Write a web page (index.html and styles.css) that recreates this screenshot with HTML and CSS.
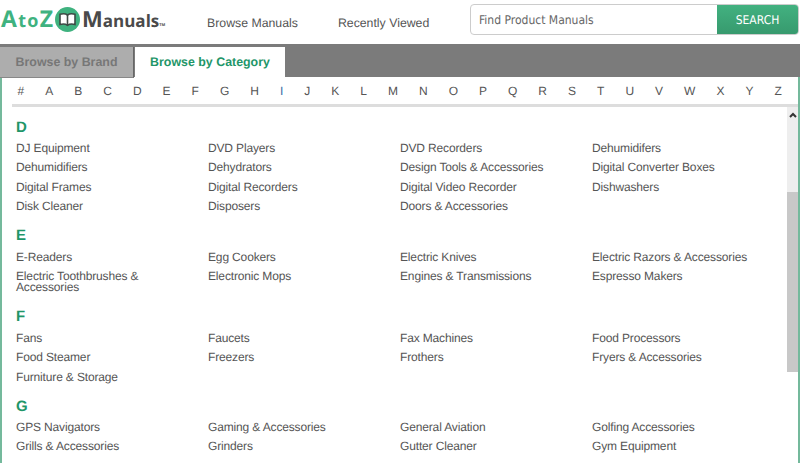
FILE: index.html
```html
<!DOCTYPE html>
<html lang="en">
<head>
<meta charset="utf-8">
<title>AtoZ Manuals</title>
<link rel="stylesheet" href="styles.css">
</head>
<body>
<header class="top">
  <a class="logo"><span class="logo-green"><span class="logo-cap">A</span>to<span class="logo-cap">Z</span></span><svg class="logo-icon" width="25" height="25" viewBox="0 0 25 25"><circle cx="12.500" cy="12.500" r="12.500" fill="#3fb27f"/><path d="M12.500 8C10.500 6.500 7.500 6.500 5 7.300V17.500C7.500 16.800 10.500 16.800 12.500 18.300C14.500 16.800 17.500 16.800 20 17.500V7.300C17.500 6.500 14.500 6.500 12.500 8Z" fill="#fff" stroke="#3d4a45" stroke-width="1.600"/><path d="M12.500 8V18.300" stroke="#3d4a45" stroke-width="1.600"/></svg><span class="logo-dark"><span class="logo-m">M</span>anuals</span><span class="tm">TM</span></a>
  <nav class="nav"><a>Browse Manuals</a><a>Recently Viewed</a></nav>
  <form class="search"><span class="search-input">Find Product Manuals</span><span class="search-btn">SEARCH</span></form>
</header>
<div class="tabband">
  <div class="tab tab-off">Browse by Brand</div>
  <div class="tab tab-on">Browse by Category</div>
</div>
<main class="panel">
  <div class="letters">
    <a>#</a><a>A</a><a>B</a><a>C</a><a>D</a><a>E</a><a>F</a><a>G</a><a>H</a><a class="narrow">I</a><a>J</a><a>K</a><a>L</a><a>M</a><a>N</a><a>O</a><a>P</a><a>Q</a><a>R</a><a>S</a><a>T</a><a>U</a><a>V</a><a>W</a><a>X</a><a>Y</a><a>Z</a>
  </div>
  <div class="body">
    <div class="list">
      <h2>D</h2>
      <div class="grid">
        <a>DJ Equipment</a><a>DVD Players</a><a>DVD Recorders</a><a>Dehumidifers</a>
        <a>Dehumidifiers</a><a>Dehydrators</a><a>Design Tools &amp; Accessories</a><a>Digital Converter Boxes</a>
        <a>Digital Frames</a><a>Digital Recorders</a><a>Digital Video Recorder</a><a>Dishwashers</a>
        <a>Disk Cleaner</a><a>Disposers</a><a>Doors &amp; Accessories</a>
      </div>
      <h2>E</h2>
      <div class="grid">
        <a>E-Readers</a><a>Egg Cookers</a><a>Electric Knives</a><a>Electric Razors &amp; Accessories</a>
        <a>Electric Toothbrushes &amp; Accessories</a><a>Electronic Mops</a><a>Engines &amp; Transmissions</a><a>Espresso Makers</a>
      </div>
      <h2>F</h2>
      <div class="grid">
        <a>Fans</a><a>Faucets</a><a>Fax Machines</a><a>Food Processors</a>
        <a>Food Steamer</a><a>Freezers</a><a>Frothers</a><a>Fryers &amp; Accessories</a>
        <a>Furniture &amp; Storage</a>
      </div>
      <h2>G</h2>
      <div class="grid">
        <a>GPS Navigators</a><a>Gaming &amp; Accessories</a><a>General Aviation</a><a>Golfing Accessories</a>
        <a>Grills &amp; Accessories</a><a>Grinders</a><a>Gutter Cleaner</a><a>Gym Equipment</a>
      </div>
    </div>
    <div class="scrollbar">
      <div class="sb-track"><svg class="sb-arrow" width="8" height="6" viewBox="0 0 8 6"><path d="M1 5L4 2L7 5" fill="none" stroke="#333" stroke-width="2"/></svg></div>
      <div class="sb-thumb"></div>
    </div>
  </div>
</main>
</body>
</html>
```
FILE: styles.css
```css
* { box-sizing: border-box; }
html, body { margin: 0; height: 463px; overflow: hidden; background: #fff; }
body { font-family: "Liberation Sans", Arial, sans-serif; color: #555; display: flex; flex-direction: column; text-rendering: geometricPrecision; }
.top { height: 44px; flex: none; display: flex; align-items: flex-start; position: relative; }
.logo { display: flex; align-items: center; height: 25px; margin: 7px 0 0 1px; width: 206px; font-weight: 700; font-family: "Open Sans", sans-serif; line-height: 25px; }
.logo-green { color: #3fb27f; font-size: 18px; width: 54px; white-space: nowrap; letter-spacing: 1.300px; }
.logo-cap { font-size: 23px; }
.logo-icon { flex: none; }
.logo-dark { color: #4a4a4a; margin-left: 2px; font-size: 17px; white-space: nowrap; }
.logo-m { font-size: 22px; }
.tm { font-size: 4px; color: #4a4a4a; align-self: flex-start; margin-top: 6px; }
.nav { display: flex; gap: 40px; margin-top: 15px; font-size: 12.300px; line-height: 17px; color: #555; white-space: nowrap; }
.search { position: absolute; left: 470px; top: 4px; width: 329px; height: 31px; display: flex; border: 1px solid #ccc; border-radius: 4px; overflow: hidden; }
.search-input { flex: 1; padding-left: 8px; font-family: "DejaVu Sans Condensed", "DejaVu Sans", sans-serif; font-size: 12px; line-height: 31px; color: #666; }
.search-btn { width: 81px; background: linear-gradient(#42b180, #379a6e); color: #fff; text-align: center; font-family: "DejaVu Sans Condensed", "DejaVu Sans", sans-serif; font-size: 12px; line-height: 31px; }
.tabband { height: 33px; flex: none; background: #7b7b7b; display: flex; align-items: flex-start; padding-top: 3px; gap: 1px; position: relative; z-index: 1; }
.tab { font-size: 12.400px; font-weight: 700; line-height: 30px; text-align: center; }
.tab-off { width: 134px; height: 31px; background: #adadad; color: #777; border-right: 1px solid #666; border-bottom: 1px solid #888; }
.tab-on { width: 150px; height: 30px; background: #fff; color: #1f9669; }
.panel { flex: 1; min-height: 0; border-left: 2px solid #74b99c; border-right: 2px solid #74b99c; display: flex; flex-direction: column; }
.letters { height: 27px; flex: none; display: flex; gap: 21px; padding: 1px 0 0 15.500px; font-size: 12px; line-height: 27px; color: #555; }
.letters a { flex: none; }
.letters a.narrow { color: #3a6ea5; }
.body { flex: 1; min-height: 0; display: flex; margin-left: 10px; border-top: 3px solid #ddd; }
.list { flex: 1; min-width: 0; overflow: hidden; padding: 10.500px 0 0 4px; }
h2 { margin: 0; font-size: 15px; line-height: 20px; color: #1f9669; font-weight: 700; }
.grid { display: grid; grid-template-columns: repeat(4, 192px); row-gap: 8px; margin: 5.500px 0 13.500px; font-size: 12px; letter-spacing: -0.150px; line-height: 11.400px; color: #555; }
.grid a { padding-right: 30px; }
.scrollbar { width: 11px; flex: none; display: flex; flex-direction: column; }
.sb-track { height: 85px; background: #eee; display: flex; justify-content: center; padding-top: 5px; }
.sb-thumb { height: 180px; background: #c8c8c8; }
```
